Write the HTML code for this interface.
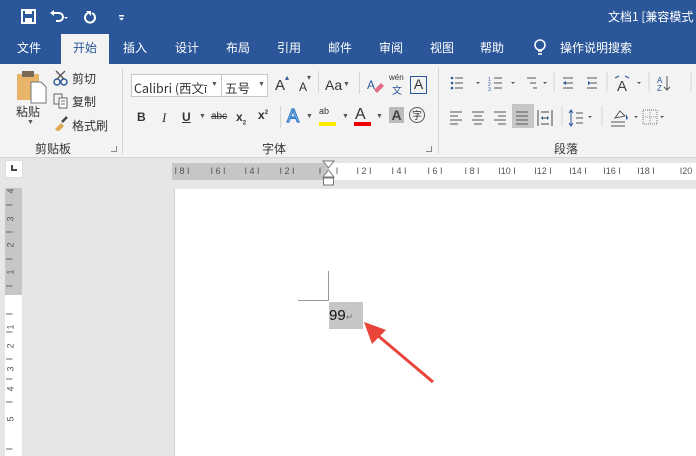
<!DOCTYPE html>
<html><head><meta charset="utf-8"><style>
*{margin:0;padding:0;box-sizing:border-box}
body{width:696px;height:456px;overflow:hidden;position:relative;background:#e6e6e6;font-family:"Liberation Sans","Noto Sans CJK SC",sans-serif;font-size:12px;color:#333}
.a{position:absolute;white-space:nowrap}
.cj{font-family:"Noto Sans CJK SC",sans-serif}
.tab{color:#fff;font-size:12px;top:39px}
.ic{position:absolute}
.rn{position:absolute;top:166px;font-size:9px;color:#555;transform:translateX(-50%)}
.vn{position:absolute;left:8px;font-size:9px;color:#555;transform:rotate(-90deg)}
</style></head><body>
<div class="a" style="left:0;top:0;width:696px;height:64px;background:#2b579a"></div>
<svg class="ic" style="left:20px;top:8px" width="110" height="18" viewBox="0 0 110 18">
<rect x="2" y="2" width="13" height="13" fill="none" stroke="#fff" stroke-width="2"/><rect x="5" y="2" width="7" height="4" fill="#fff"/><rect x="5" y="10" width="7" height="5" fill="#fff"/>
<path d="M33 5 h6 a4 4 0 0 1 0 8 h-3" fill="none" stroke="#fff" stroke-width="2"/><path d="M30 5 l4 -3 v6z" fill="#fff"/>
<path d="M44 9 l2 2 l2 -2z" fill="#fff"/>
<path d="M72 5 a5 5 0 1 1 -4 0" fill="none" stroke="#fff" stroke-width="2"/><path d="M66 3 h5 v5z" fill="#fff"/>
<rect x="99" y="7" width="5" height="1.5" fill="#fff"/><path d="M99 10 h5 l-2.5 2.5z" fill="#fff"/>
</svg>
<div class="a cj" style="left:608px;top:8px;color:#fff;font-size:12px">文档1 [兼容模式</div>
<div class="a" style="left:61px;top:34px;width:48px;height:30px;background:#f3f3f3"></div>
<div class="a cj tab" style="left:17px">文件</div>
<div class="a cj tab" style="left:73px;color:#2b579a">开始</div>
<div class="a cj tab" style="left:123px">插入</div>
<div class="a cj tab" style="left:175px">设计</div>
<div class="a cj tab" style="left:226px">布局</div>
<div class="a cj tab" style="left:277px">引用</div>
<div class="a cj tab" style="left:328px">邮件</div>
<div class="a cj tab" style="left:379px">审阅</div>
<div class="a cj tab" style="left:430px">视图</div>
<div class="a cj tab" style="left:480px">帮助</div>
<svg class="ic" style="left:533px;top:38px" width="14" height="20"><circle cx="7" cy="7" r="5" fill="none" stroke="#fff" stroke-width="1.5"/><path d="M5 13 h4 M5 16 h4" stroke="#fff" stroke-width="1.5"/></svg>
<div class="a cj tab" style="left:560px">操作说明搜索</div>
<div class="a" style="left:0;top:64px;width:696px;height:94px;background:#f3f3f3;border-bottom:1px solid #d5d5d5"></div>
<div class="a" style="left:122px;top:68px;width:1px;height:86px;background:#d4d4d4"></div>
<div class="a" style="left:438px;top:68px;width:1px;height:86px;background:#d4d4d4"></div>
<svg class="ic" style="left:14px;top:70px" width="34" height="34"><rect x="3" y="4" width="22" height="26" fill="#e8b56b"/><rect x="8" y="1" width="12" height="6" fill="#7a6a55"/><path d="M17 12 h10 l5 5 v16 h-15z" fill="#fff" stroke="#777"/></svg>
<div class="a cj" style="left:16px;top:103px;font-size:12px">粘贴</div>
<div class="a" style="left:27px;top:119px;font-size:7px;color:#555">▼</div>
<svg class="ic" style="left:53px;top:70px" width="16" height="16"><circle cx="4" cy="12" r="3" fill="none" stroke="#2b579a" stroke-width="1.4"/><circle cx="11" cy="12" r="3" fill="none" stroke="#2b579a" stroke-width="1.4"/><path d="M4 9 L12 1 M11 9 L3 1" stroke="#555" stroke-width="1.4"/></svg>
<div class="a cj" style="left:72px;top:70px">剪切</div>
<svg class="ic" style="left:53px;top:93px" width="16" height="16"><rect x="1" y="1" width="8" height="10" fill="none" stroke="#666"/><rect x="6" y="5" width="8" height="10" fill="#fff" stroke="#666"/><path d="M8 8h4M8 11h4" stroke="#666"/></svg>
<div class="a cj" style="left:72px;top:93px">复制</div>
<svg class="ic" style="left:53px;top:115px" width="16" height="16"><path d="M2 14 l6 -6 l3 3 l-6 6z" fill="#e0a850"/><path d="M9 7 l5 -5" stroke="#444" stroke-width="2.5"/></svg>
<div class="a cj" style="left:72px;top:117px">格式刷</div>
<div class="a cj" style="left:35px;top:140px">剪贴板</div>
<div class="a" style="left:111px;top:146px;width:6px;height:6px;border:1px solid #888;border-top:none;border-left:none"></div>
<div class="a" style="left:131px;top:74px;width:91px;height:23px;background:#fff;border:1px solid #c6c6c6"></div>
<div class="a cj" style="left:134px;top:78px;font-size:12.5px">Calibri (西文<span style="font-size:11px">ī</span></div>
<div class="a" style="left:211px;top:81px;font-size:7px;color:#555">▼</div>
<div class="a" style="left:221px;top:74px;width:47px;height:23px;background:#fff;border:1px solid #c6c6c6"></div>
<div class="a cj" style="left:225px;top:78px;font-size:12.5px">五号</div>
<div class="a" style="left:258px;top:81px;font-size:7px;color:#555">▼</div>
<div class="a" style="left:275px;top:77px;font-size:15px">A</div><div class="a" style="left:285px;top:73px;font-size:8px;color:#2b579a">▴</div>
<div class="a" style="left:299px;top:80px;font-size:12px">A</div><div class="a" style="left:307px;top:73px;font-size:8px;color:#555">▾</div>
<div class="a" style="left:318px;top:71px;width:1px;height:22px;background:#d4d4d4"></div>
<div class="a" style="left:325px;top:77px;font-size:14px">Aa</div><div class="a" style="left:343px;top:81px;font-size:7px;color:#555">▼</div>
<div class="a" style="left:359px;top:72px;width:1px;height:22px;background:#d4d4d4"></div>
<svg class="ic" style="left:367px;top:76px" width="18" height="18"><text x="0" y="13" font-size="12" fill="#2b579a" font-family="Liberation Sans">A</text><path d="M7 14 l7 -7 l3 3 l-7 7z" fill="#e36c8a"/></svg>
<div class="a" style="left:389px;top:73px;font-size:8px;color:#333">wén</div>
<div class="a cj" style="left:392px;top:82px;font-size:10px;color:#2b579a">文</div>
<div class="a" style="left:410px;top:76px;width:17px;height:18px;border:1.5px solid #2b579a;font-size:14px;text-align:center;line-height:15px;color:#333">A</div>
<div class="a" style="left:137px;top:110px;font-weight:bold;font-size:12px">B</div>
<div class="a" style="left:162px;top:110px;font-style:italic;font-family:'Liberation Serif';font-size:13px">I</div>
<div class="a" style="left:182px;top:110px;font-weight:bold;text-decoration:underline">U</div>
<div class="a" style="left:199px;top:113px;font-size:7px;color:#555">▼</div>
<div class="a" style="left:211px;top:111px;font-size:10px;text-decoration:line-through">abc</div>
<div class="a" style="left:236px;top:110px;font-weight:bold">x<sub style="font-size:6px">2</sub></div>
<div class="a" style="left:258px;top:108px;font-weight:bold">x<sup style="font-size:6px">2</sup></div>
<div class="a" style="left:280px;top:106px;width:1px;height:22px;background:#d4d4d4"></div>
<div class="a" style="left:287px;top:106px;font-size:18px;color:#fff;-webkit-text-stroke:1.2px #2b79c9">A</div>
<div class="a" style="left:306px;top:113px;font-size:7px;color:#555">▼</div>
<div class="a" style="left:319px;top:106px;font-size:9px">ab</div><div class="a" style="left:319px;top:122px;width:17px;height:4px;background:#ffeb00"></div>
<div class="a" style="left:342px;top:113px;font-size:7px;color:#555">▼</div>
<div class="a" style="left:355px;top:106px;font-size:16px;color:#333">A</div><div class="a" style="left:354px;top:122px;width:17px;height:4px;background:#e00"></div>
<div class="a" style="left:376px;top:113px;font-size:7px;color:#555">▼</div>
<div class="a" style="left:389px;top:107px;width:15px;height:16px;background:#bbb;font-size:14px;text-align:center;line-height:16px;font-weight:bold;color:#444">A</div>
<div class="a cj" style="left:409px;top:107px;width:16px;height:16px;border:1px solid #555;border-radius:50%;font-size:10px;text-align:center;line-height:14px">字</div>
<div class="a cj" style="left:262px;top:140px">字体</div>
<div class="a" style="left:426px;top:146px;width:6px;height:6px;border:1px solid #888;border-top:none;border-left:none"></div>
<svg class="ic" style="left:445px;top:72px" width="251" height="60" viewBox="0 0 251 60" fill="none" stroke="#555">
<g fill="#2b579a" stroke="none"><circle cx="7" cy="6" r="1.3"/><circle cx="7" cy="11" r="1.3"/><circle cx="7" cy="16" r="1.3"/></g>
<path d="M10 6h8M10 11h8M10 16h8"/><path d="M31 10l2 2l2-2z" fill="#555" stroke="none"/>
<path d="M49 6h8M49 11h8M49 16h8"/><text x="43" y="9" font-size="5" fill="#2b579a" stroke="none">1</text><text x="43" y="14" font-size="5" fill="#2b579a" stroke="none">2</text><text x="43" y="19" font-size="5" fill="#2b579a" stroke="none">3</text>
<path d="M66 10l2 2l2-2z" fill="#555" stroke="none"/>
<path d="M82 6h9M85 11h6M88 16h4"/><path d="M98 10l2 2l2-2z" fill="#555" stroke="none"/>
<path d="M109 0v20" stroke="#d4d4d4"/>
<path d="M118 6h10M122 11h6M118 16h10M123 11h-5" stroke="#555"/><path d="M118 11l3-2v4z" fill="#2b579a" stroke="none"/>
<path d="M142 6h10M146 11h6M142 16h10"/><path d="M146 11l-3-2v4z" fill="#2b579a" stroke="none"/>
<path d="M162 0v20" stroke="#d4d4d4"/>
<text x="172" y="19" font-size="15" fill="#444" stroke="none" font-family="Liberation Sans">A</text><path d="M170 6l4-2M184 6l-4-2" stroke="#2b579a"/>
<path d="M192 10l2 2l2-2z" fill="#555" stroke="none"/>
<path d="M204 0v20" stroke="#d4d4d4"/>
<text x="212" y="11" font-size="8" fill="#2b579a" stroke="none">A</text><text x="212" y="19" font-size="8" fill="#2b579a" stroke="none">Z</text><path d="M222 4v14M219 15l3 3l3-3"/>
<path d="M246 0v20" stroke="#d4d4d4"/>
<path d="M5 40h12M5 44h8M5 48h12M5 52h8"/>
<path d="M27 40h12M29 44h8M27 48h12M29 52h8"/>
<path d="M49 40h12M53 44h8M49 48h12M53 52h8"/>
</svg>
<div class="a" style="left:512px;top:104px;width:22px;height:24px;background:#c6c6c6"></div>
<svg class="ic" style="left:445px;top:72px" width="251" height="60" viewBox="0 0 251 60" fill="none" stroke="#555">
<path d="M71 40h12M71 44h12M71 48h12M71 52h12"/>
<path d="M93 38v16M107 38v16M96 40h8M96 52h8M97 46h6" stroke="#444"/><path d="M96 46l2-2v4zM104 46l-2-2v4z" fill="#2b579a" stroke="none"/>
<path d="M117 34v20" stroke="#d4d4d4"/>
<path d="M126 39v14M124 41l2-3l2 3M124 51l2 3l2-3" stroke="#2b579a"/><path d="M131 41h7M131 46h7M131 51h7"/><path d="M143 44l2 2l2-2z" fill="#555" stroke="none"/>
<path d="M157 34v20" stroke="#d4d4d4"/>
<path d="M166 50h14M166 54h14"/><path d="M170 46l5-7l5 5z" fill="#fff"/><path d="M181 42l2 4l-2 2z" fill="#2b579a" stroke="none"/><path d="M189 44l2 2l2-2z" fill="#555" stroke="none"/>
<rect x="198" y="38" width="14" height="14" stroke="#777" stroke-dasharray="1 1"/><path d="M205 38v14M198 45h14" stroke="#999" stroke-dasharray="1 1"/><path d="M215 44l2 2l2-2z" fill="#555" stroke="none"/>
</svg>
<div class="a cj" style="left:554px;top:140px">段落</div>
<!-- ruler -->
<div class="a" style="left:5px;top:160px;width:18px;height:18px;background:#fff;border:1px solid #ddd"></div>
<div class="a" style="left:11px;top:165px;width:6px;height:6px;border-left:2px solid #444;border-bottom:2px solid #444"></div>
<div class="a" style="left:172px;top:163px;width:524px;height:17px;background:#fff"></div>
<div class="a" style="left:172px;top:163px;width:156px;height:17px;background:#c6c6c6"></div>
<svg class="ic" style="left:322px;top:160px" width="14" height="28"><path d="M1 1h11l-5.5 7zM1 17h11l-5.5-7z" fill="#fff" stroke="#777"/><rect x="1.5" y="18" width="10" height="7" fill="#fff" stroke="#777"/></svg>
<div class="rn" style="left:182px">I 8 I</div>
<div class="rn" style="left:218px">I 6 I</div>
<div class="rn" style="left:252px">I 4 I</div>
<div class="rn" style="left:287px">I 2 I</div>
<div class="rn" style="left:320px">I</div>
<div class="rn" style="left:337px">I</div>
<div class="rn" style="left:364px">I 2 I</div>
<div class="rn" style="left:399px">I 4 I</div>
<div class="rn" style="left:435px">I 6 I</div>
<div class="rn" style="left:472px">I 8 I</div>
<div class="rn" style="left:507px">I10 I</div>
<div class="rn" style="left:543px">I12 I</div>
<div class="rn" style="left:578px">I14 I</div>
<div class="rn" style="left:612px">I16 I</div>
<div class="rn" style="left:646px">I18 I</div>
<div class="rn" style="left:686px">I20</div>
<!-- vertical ruler -->
<div class="a" style="left:5px;top:188px;width:17px;height:268px;background:#fff"></div>
<div class="a" style="left:5px;top:188px;width:17px;height:107px;background:#c6c6c6"></div>
<div class="vn" style="top:186px">4</div><div class="vn" style="top:200px">I</div><div class="vn" style="top:214px">3</div><div class="vn" style="top:227px">I</div><div class="vn" style="top:240px">2</div><div class="vn" style="top:254px">I</div><div class="vn" style="top:267px">1</div><div class="vn" style="top:281px">I</div>
<div class="vn" style="top:309px">I</div><div class="vn" style="top:322px">1</div><div class="vn" style="top:327px">I</div><div class="vn" style="top:341px">2</div><div class="vn" style="top:354px">I</div><div class="vn" style="top:364px">3</div><div class="vn" style="top:374px">I</div><div class="vn" style="top:384px">4</div><div class="vn" style="top:397px">I</div><div class="vn" style="top:414px">5</div><div class="vn" style="top:444px">I</div>
<!-- page -->
<div class="a" style="left:174px;top:189px;width:522px;height:267px;background:#fff;border-left:1px solid #d0d0d0"></div>
<div class="a" style="left:328px;top:271px;width:1px;height:30px;background:#999"></div>
<div class="a" style="left:298px;top:300px;width:30px;height:1px;background:#999"></div>
<div class="a" style="left:329px;top:302px;width:34px;height:27px;background:#c6c6c6"></div>
<div class="a" style="left:329px;top:307px;font-size:15px;color:#111">99<span style="font-size:9px;color:#777">↵</span></div>
<svg class="ic" style="left:360px;top:318px" width="80" height="70"><path d="M73 64 L16 16" stroke="#e8443a" stroke-width="3"/><path d="M4 4 L26 12 L12 26z" fill="#e8443a"/></svg>
</body></html>
